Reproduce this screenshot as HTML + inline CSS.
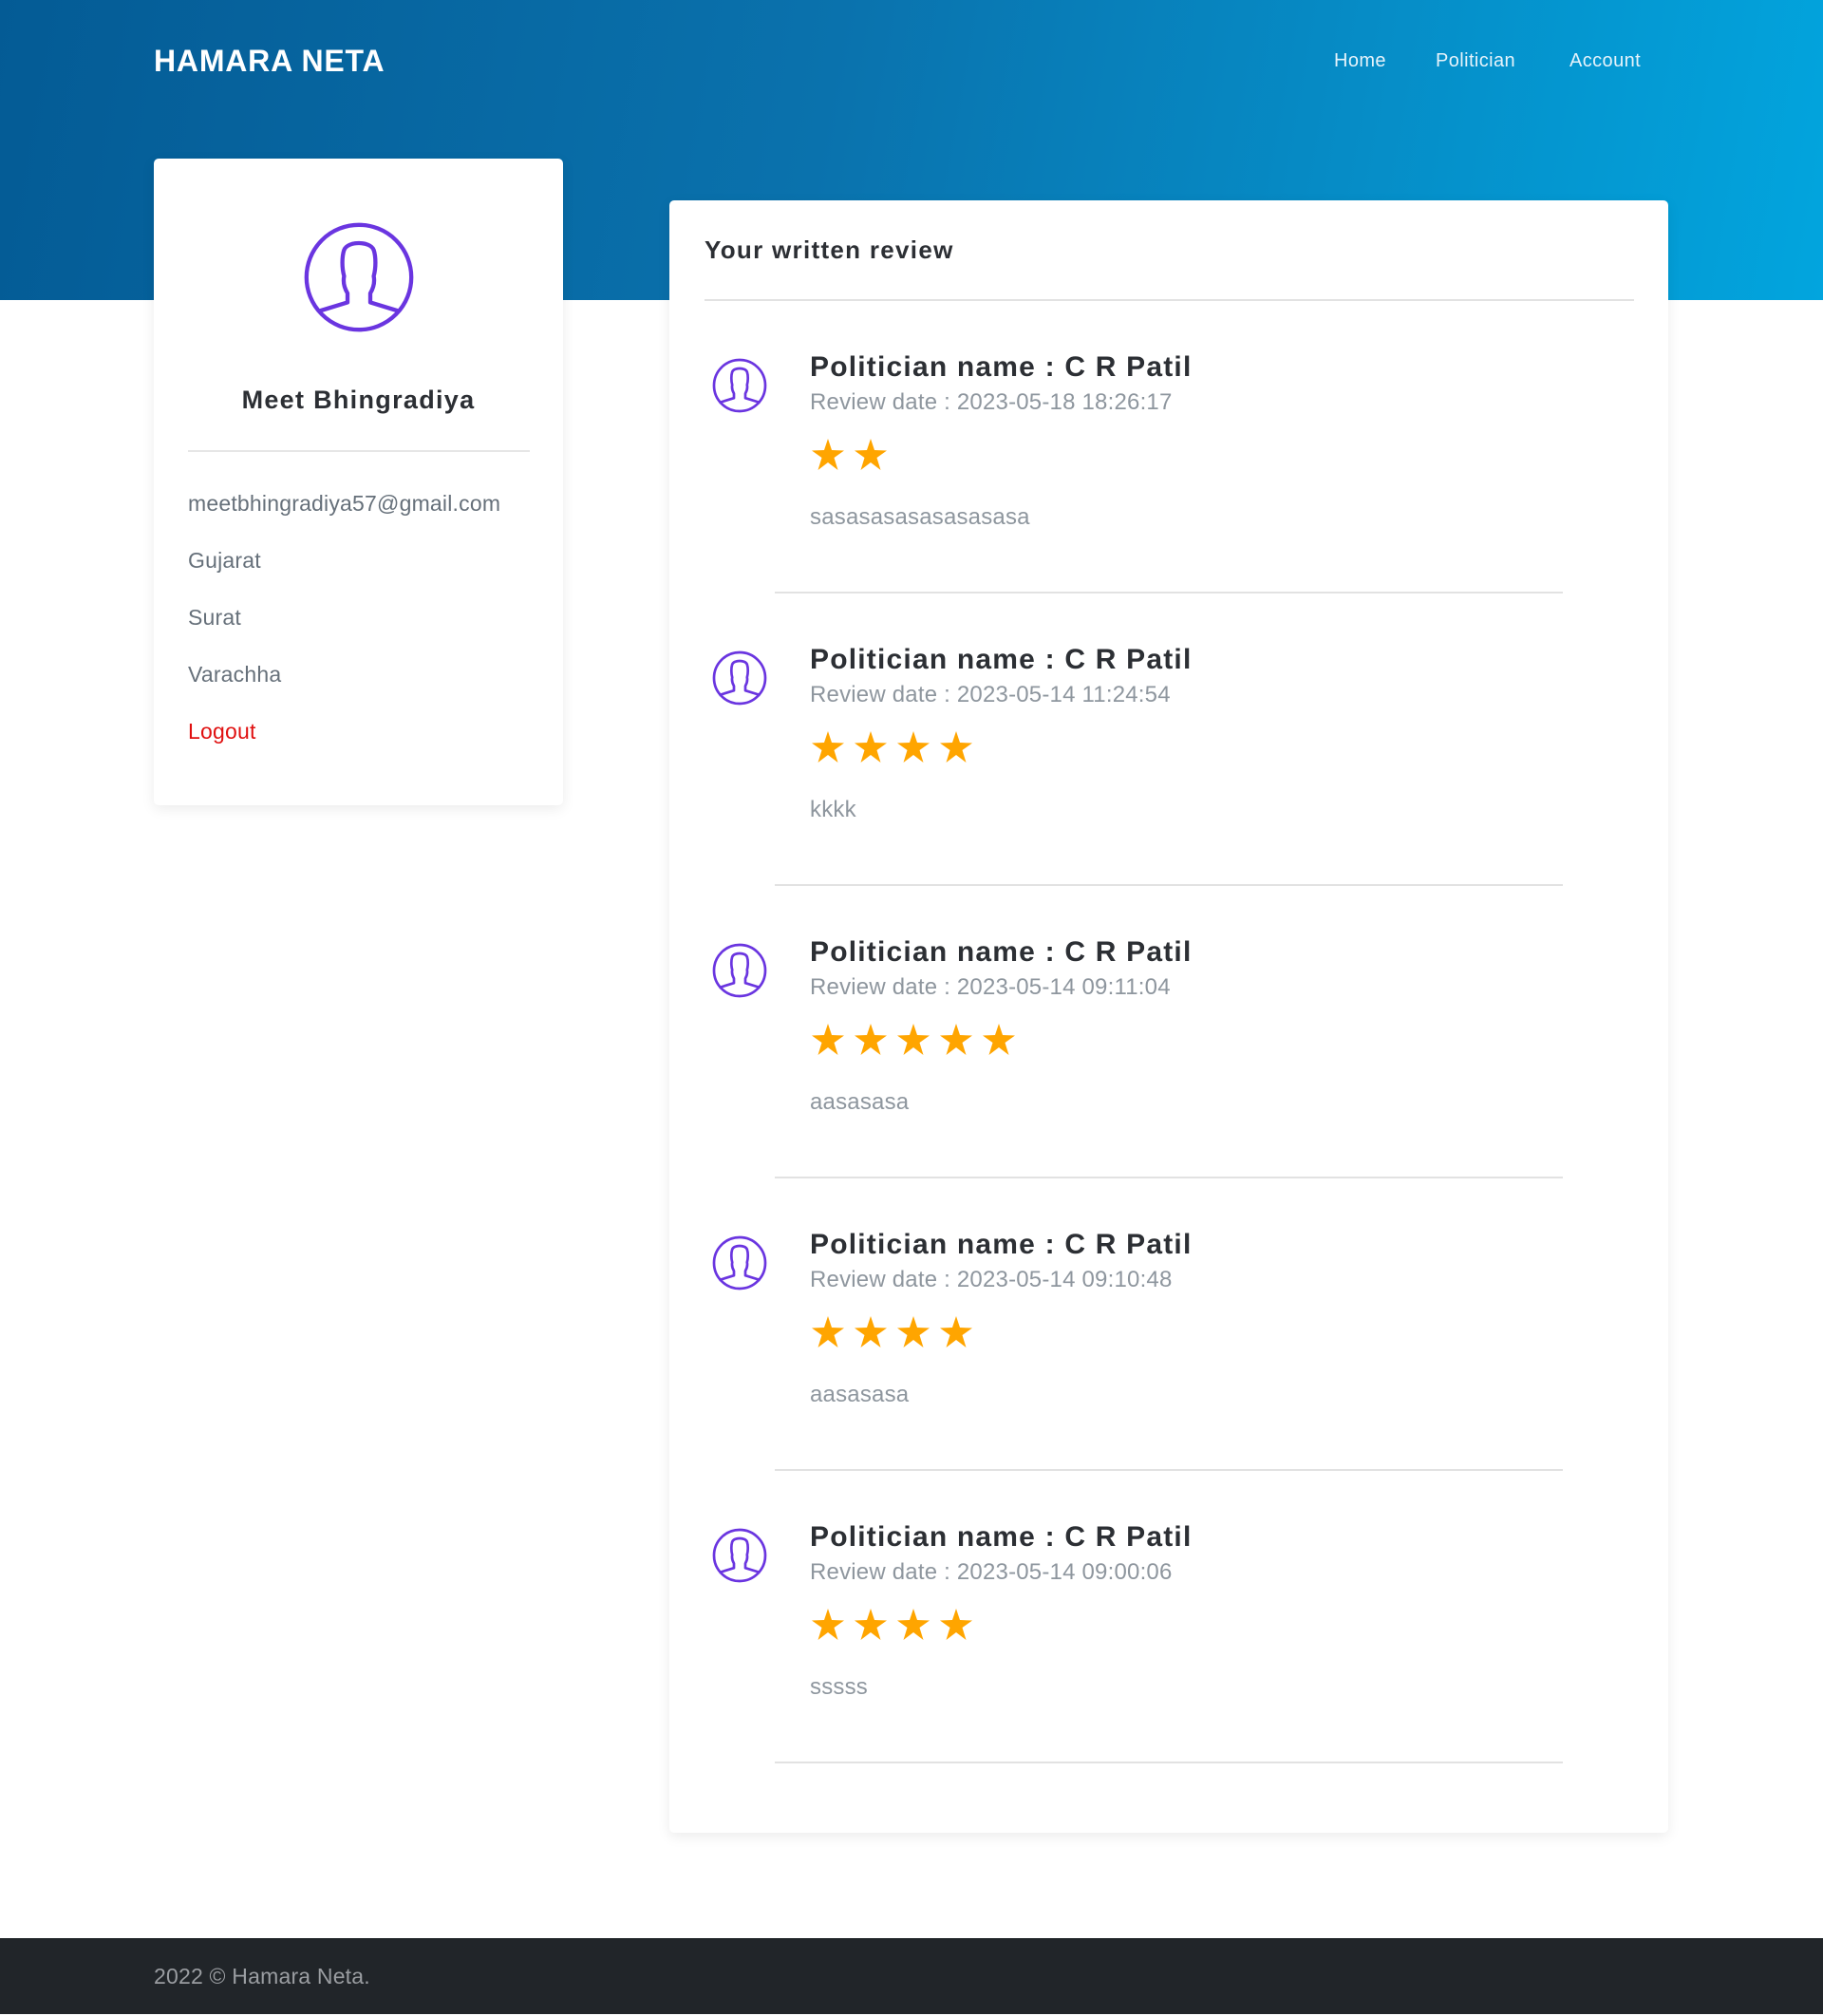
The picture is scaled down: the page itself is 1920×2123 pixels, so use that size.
<!DOCTYPE html>
<html><head><meta charset="utf-8"><style>
*{margin:0;padding:0;box-sizing:border-box}
body{width:1920px;height:2123px;position:relative;background:#fff;font-family:"Liberation Sans",sans-serif;overflow:hidden}
.hdr{position:absolute;left:0;top:0;width:1920px;height:316px;background:linear-gradient(100deg,#045b95 0%,#0a72ad 45%,#02a5de 100%)}
.brand{position:absolute;left:162px;top:46px;color:#fff;font-weight:bold;font-size:32px;letter-spacing:0.8px}
.nav{position:absolute;top:53px;color:#e6f3fb;font-size:20px;letter-spacing:0.4px}
.card{position:absolute;background:#fff;border-radius:5px;box-shadow:0 4px 14px rgba(0,0,0,0.08)}
.abs{position:absolute}
.info{position:absolute;left:36px;font-size:23px;color:#66707a;letter-spacing:0.2px}
.title{position:absolute;left:148px;font-size:30px;font-weight:bold;color:#2c2f34;letter-spacing:1.2px}
.date{position:absolute;left:148px;font-size:24px;color:#8e969e;letter-spacing:0.2px}
.txt{position:absolute;left:148px;font-size:24px;color:#8e969e;letter-spacing:0.2px}
.sep{position:absolute;left:111px;width:830px;height:2px;background:#e2e2e2}
.footer{position:absolute;left:0;top:2041px;width:1920px;height:80px;background:#212529}
</style></head><body>
<div class="hdr"></div>
<div class="brand">HAMARA NETA</div>
<div class="nav" style="left:1405px">Home</div>
<div class="nav" style="left:1512px">Politician</div>
<div class="nav" style="left:1653px">Account</div>

<div class="card" style="left:162px;top:167px;width:431px;height:681px">
<svg class="abs" style="left:156px;top:65px" width="120" height="120" viewBox="0 0 100 100"><g fill="none" stroke="#6a35e0" stroke-width="3.6" stroke-linejoin="round"><circle cx="50" cy="50" r="46"/><path d="M14,80 L40,72 L40,64 C37,59 36,54 37,49 C35,42 35,32 37,26 C40,18 60,18 63,26 C65,32 65,42 63,49 C64,54 63,59 60,64 L60,72 L86,80"/></g></svg>
<div class="abs" style="left:0;width:431px;top:239px;text-align:center;font-size:27px;font-weight:bold;color:#2c2f34;letter-spacing:1.3px">Meet Bhingradiya</div>
<div class="abs" style="left:36px;top:307px;width:360px;height:2px;background:#e6e6e6"></div>
<div class="info" style="top:350px">meetbhingradiya57@gmail.com</div>
<div class="info" style="top:410px">Gujarat</div>
<div class="info" style="top:470px">Surat</div>
<div class="info" style="top:530px">Varachha</div>
<div class="info" style="top:590px;color:#e01010">Logout</div>
</div>

<div class="card" style="left:705px;top:211px;width:1052px;height:1719px">
<div class="abs" style="left:37px;top:37px;font-size:26px;font-weight:bold;color:#2c2f34;letter-spacing:1.3px">Your written review</div>
<div class="abs" style="left:37px;top:104px;width:979px;height:2px;background:#e2e2e2"></div>
</div>

<div id="reviews"></div>
<script>
var data=[["2023-05-18 18:26:17",2,"sasasasasasasasasa"],["2023-05-14 11:24:54",4,"kkkk"],["2023-05-14 09:11:04",5,"aasasasa"],["2023-05-14 09:10:48",4,"aasasasa"],["2023-05-14 09:00:06",4,"sssss"]];
var h="";
data.forEach(function(d,i){
 var t=346+308*i;
 h+='<div class="abs" style="left:705px;top:'+t+'px;width:1052px;height:308px">';
 h+='<svg class="abs" style="left:44px;top:30px" width="60" height="60" viewBox="0 0 100 100"><g fill="none" stroke="#6a35e0" stroke-width="4.5" stroke-linejoin="round"><circle cx="50" cy="50" r="45"/><path d="M14,80 L40,72 L40,64 C37,59 36,54 37,49 C35,42 35,32 37,26 C40,18 60,18 63,26 C65,32 65,42 63,49 C64,54 63,59 60,64 L60,72 L86,80"/></g></svg>';
 h+='<div class="title" style="top:24px">Politician name : C R Patil</div>';
 h+='<div class="date" style="top:64px">Review date : '+d[0]+'</div>';
 for(var s=0;s<d[1];s++){h+='<svg class="abs" style="left:'+(150+45*s)+'px;top:116px" width="34" height="33" viewBox="0 0 34 33"><polygon fill="#ffa500" points="17,0 21,12 34,12.5 23.5,20 27.5,33 17,25 6.5,33 10.5,20 0,12.5 13,12"/></svg>';}
 h+='<div class="txt" style="top:185px">'+d[2]+'</div>';
 h+='<div class="sep" style="top:277px"></div></div>';
});
document.getElementById("reviews").innerHTML=h;
</script>

<div class="footer"><div class="abs" style="left:162px;top:27px;font-size:23px;color:#9a9da1;letter-spacing:0.2px">2022 © Hamara Neta.</div></div>
</body></html>
